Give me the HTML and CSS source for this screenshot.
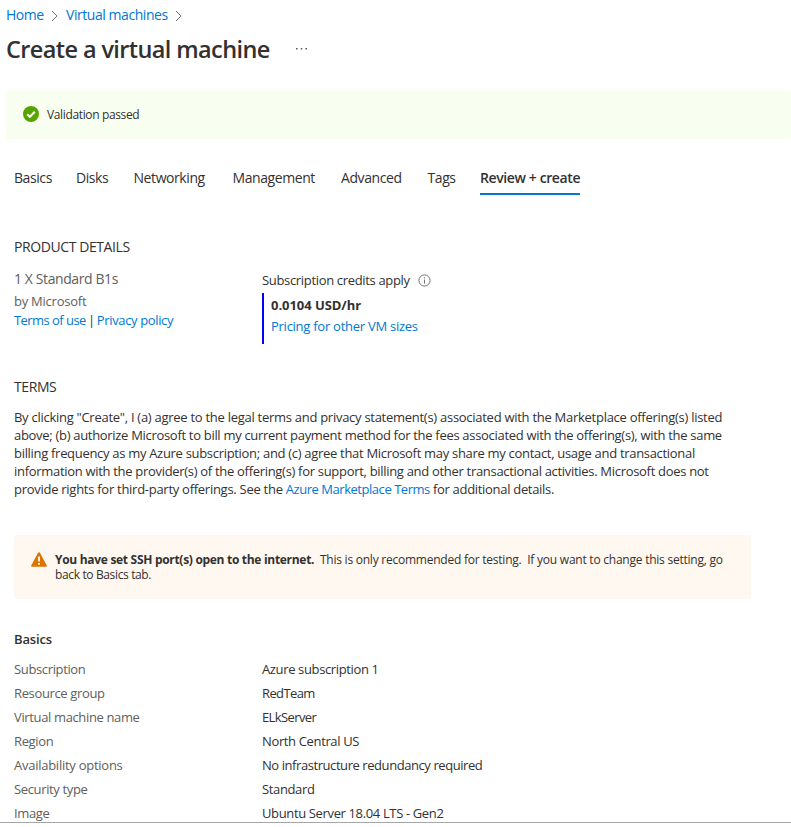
FILE: index.html
```html
<!DOCTYPE html>
<html lang="en">
<head>
<meta charset="utf-8">
<title>Create a virtual machine</title>
<link rel="stylesheet" href="styles.css">
</head>
<body>
<nav class="breadcrumb">
  <a>Home</a>
  <svg class="chevron" viewBox="0 0 7 12"><path d="M1 1l5 5-5 5"/></svg>
  <a>Virtual machines</a>
  <svg class="chevron" viewBox="0 0 7 12"><path d="M1 1l5 5-5 5"/></svg>
</nav>
<header class="heading">
  <h1>Create a virtual machine</h1>
  <svg class="more" viewBox="0 0 11 2"><path d="M0 0h1.6v1.6H0zM4.7 0h1.6v1.6H4.7zM9.4 0H11v1.6H9.4z"/></svg>
</header>
<div class="banner passed">
  <svg class="check" viewBox="0 0 16 16"><circle cx="8" cy="8" r="8"/><path d="M4.3 8.2l2.6 2.6 4.9-5"/></svg>
  <span class="message">Validation passed</span>
</div>
<main class="content">
  <div class="tabs">
    <span>Basics</span>
    <span>Disks</span>
    <span>Networking</span>
    <span>Management</span>
    <span>Advanced</span>
    <span>Tags</span>
    <span class="active">Review + create</span>
  </div>
  <h2 class="caps">PRODUCT DETAILS</h2>
  <section class="product">
    <div class="offer">
      <div class="plan">1 X Standard B1s</div>
      <div class="vendor">by Microsoft</div>
      <div class="legal"><a class="use">Terms of use</a> | <a>Privacy policy</a></div>
    </div>
    <div class="pricing">
      <div class="credits">Subscription credits apply
        <svg class="info" viewBox="0 0 13 13"><circle cx="6.5" cy="6.5" r="5.6"/><path d="M6.5 5.6v4M6.5 3.3v1.2"/></svg>
      </div>
      <div class="price">
        <strong>0.0104 USD/hr</strong>
        <a>Pricing for other VM sizes</a>
      </div>
    </div>
  </section>
  <h2 class="caps terms-title">TERMS</h2>
  <p class="terms">
    <span class="wide">By clicking "Create", I (a) agree to the legal terms and privacy statement(s) associated with the Marketplace offering(s) listed</span><br>
    above; (b) authorize Microsoft to bill my current payment method for the fees associated with the offering(s), with the same<br>
    billing frequency as my Azure subscription; and (c) agree that Microsoft may share my contact, usage and transactional<br>
    information with the provider(s) of the offering(s) for support, billing and other transactional activities. Microsoft does not<br>
    <span class="wide">provide rights for third-party offerings. See the <a>Azure Marketplace Terms</a></span> for additional details.
  </p>
  <div class="banner warning">
    <svg class="alert" viewBox="0 0 16 15"><path class="tri" d="M7.1.8a1 1 0 0 1 1.8 0l6.9 12.6a1 1 0 0 1-.9 1.4H1.1a1 1 0 0 1-.9-1.4z"/><path class="mark" d="M8 4.5v5M8 11v1.8"/></svg>
    <p><strong>You have set SSH port(s) open to the internet.</strong><span class="note">&nbsp; This is only recommended for testing.&nbsp; If you want to change this setting, go</span><br>back to Basics tab.</p>
  </div>
  <h2 class="section-title">Basics</h2>
  <dl class="summary">
    <dt>Subscription</dt><dd>Azure subscription 1</dd>
    <dt>Resource group</dt><dd class="tight">RedTeam</dd>
    <dt>Virtual machine name</dt><dd class="tight">ELkServer</dd>
    <dt>Region</dt><dd>North Central US</dd>
    <dt class="loose">Availability options</dt><dd class="snug">No infrastructure redundancy required</dd>
    <dt>Security type</dt><dd>Standard</dd>
    <dt>Image</dt><dd>Ubuntu Server 18.04 LTS - Gen2</dd>
  </dl>
</main>
</body>
</html>
```
FILE: styles.css
```css
* { box-sizing: border-box; }
body { margin: 0; height: 827px; overflow: hidden; background: #fff; color: #323130; font: 13px/18px "Open Sans", "Noto Sans", sans-serif; letter-spacing: -0.36px; white-space: nowrap; }
h1, h2, p, dl, dd { margin: 0; }
a { color: #0078d4; text-decoration: none; }
.breadcrumb { display: flex; align-items: center; height: 20px; margin: 5px 0 0 6px; font-size: 14px; letter-spacing: -0.45px; }
.chevron { width: 7px; height: 12px; margin: 1px 7.7px 0 7.6px; fill: none; stroke: #757575; }
.heading { display: flex; align-items: center; height: 32px; margin: 8px 0 25px 6px; }
h1 { width: 290px; font-size: 23.5px; line-height: 32px; font-weight: 600; letter-spacing: -0.61px; }
.more { width: 11px; height: 2px; fill: #605e5c; }
.banner { display: flex; border-radius: 2px; font-size: 12px; }
.passed { height: 49px; margin-left: 6px; padding: 0 0 1px 17px; align-items: center; background: #f8fff0; }
.message { padding-top: 2px; }
.check { width: 16px; height: 16px; margin-right: 8px; fill: #57a300; }
.check path { fill: none; stroke: #fff; stroke-width: 2; }
.content { padding: 29px 0 0 14px; }
.tabs { display: grid; grid-template-columns: 62px 57.5px 99px 108.5px 86.5px 52.5px 100px; height: 27px; font-size: 14px; line-height: 20px; letter-spacing: -0.42px; }
.active { font-weight: 600; letter-spacing: -0.39px; border-bottom: 2px solid #0078d4; }
.caps { margin-top: 43px; font-size: 14px; font-weight: 400; line-height: 18px; letter-spacing: -0.41px; }
.product { display: flex; height: 89px; margin-top: 13px; }
.offer { width: 248px; color: #605e5c; }
.plan { font-size: 14px; line-height: 20px; letter-spacing: -0.4px; }
.vendor { margin-top: 1px; line-height: 22px; letter-spacing: -0.24px; }
.legal { margin-top: -1px; line-height: 18px; color: #323130; word-spacing: -0.9px; }
.legal a { word-spacing: 0; }
.use { letter-spacing: -0.55px; }
.credits { display: flex; align-items: center; height: 22px; letter-spacing: -0.33px; }
.info { width: 13px; height: 13px; margin-left: 8.5px; fill: none; stroke: #757575; }
.price { display: flex; flex-direction: column; height: 51px; margin-top: 2px; border-left: 2px solid #00f; padding: 2px 0 0 7px; line-height: 21px; letter-spacing: -0.26px; }
.price strong { letter-spacing: -0.05px; }
.terms-title { margin-top: 20px; }
.terms { margin-top: 12px; line-height: 18px; letter-spacing: -0.305px; }
.wide { letter-spacing: -0.273px; }
.wide a { letter-spacing: -0.46px; }
.warning { width: 737px; height: 64px; margin-top: 37px; padding: 17px 0 0 17px; background: #fff8f0; line-height: 15px; }
.warning strong { letter-spacing: -0.3px; }
.note { letter-spacing: -0.235px; }
.alert { width: 16px; height: 15px; margin-right: 8px; }
.tri { fill: #db7500; }
.mark { stroke: #fff; stroke-width: 1.8; }
.section-title { margin-top: 31px; font-size: 13px; font-weight: 600; line-height: 18px; letter-spacing: -0.15px; }
.summary { display: grid; grid-template-columns: 248px 1fr; grid-auto-rows: 24px; height: 166px; overflow: hidden; margin: 9px 0 0 -14px; padding-left: 14px; line-height: 24px; border-bottom: 1px solid #a6a6a6; }
dt { color: #605e5c; }
.tight { letter-spacing: -0.6px; }
.snug { letter-spacing: -0.43px; }
.loose { letter-spacing: -0.26px; }
```
